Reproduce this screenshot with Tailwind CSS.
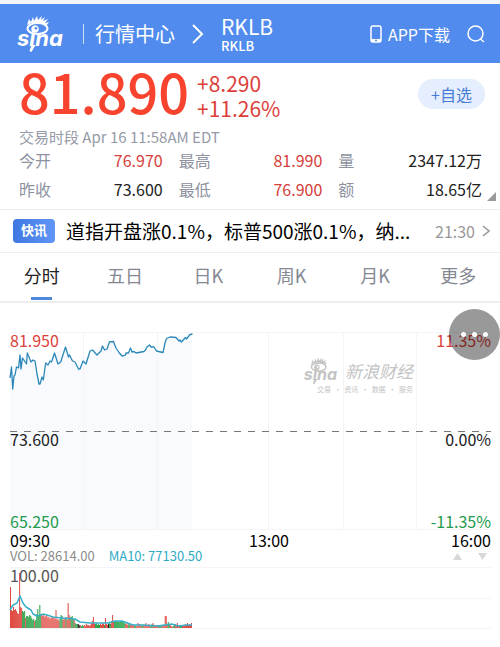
<!DOCTYPE html>
<html lang="zh-CN">
<head>
    <meta charset="UTF-8">
    <meta name="viewport" content="width=device-width, initial-scale=1.0">
    <title>RKLB 行情中心</title>
    <script src="https://cdn.jsdelivr.net/npm/@tailwindcss/browser@4"></script>
</head>
<body class="bg-white text-[#222] font-['Noto_Sans_CJK_SC',sans-serif]">
    <!-- Top bar -->
    <header class="flex items-center h-[63px] border-t-4 border-[#f3f5f6] bg-[#508bed] text-white pl-4 pr-[15px]">
        <a href="#" aria-label="sina" class="shrink-0">
            <svg class="w-[52px] h-[38px]" viewBox="0 0 52 38" fill="currentColor">
                <g id="sinaLogo">
                    <ellipse cx="21.500" cy="13.500" rx="10" ry="5.500" fill="none" stroke="currentColor" stroke-width="2"/>
                    <path fill-rule="evenodd" d="M19 10.200a3.800 3.800 0 1 0 .1 0zM20 12a1.400 1.400 0 1 1-.1 0z"/>
                    <path d="M11 10L13 4l2 3L17 2l1 4L21 1l1 4L26 1l-1 4L29 2l-2 4L32 4l-3 4 4-1-3 4C26 7 17 6 11 10z"/>
                    <path d="M15.500 30h4l-4 7-2-1z"/>
                    <text x="1" y="31" font-family="Inter, sans-serif" font-size="22" font-weight="700" font-style="italic">sina</text>
                </g>
            </svg>
        </a>
        <span class="w-px h-5 ml-[15px] bg-white/70"></span>
        <a href="#" class="ml-[11px] text-xl whitespace-nowrap">行情中心</a>
        <svg class="w-3 h-5 ml-[17px] shrink-0" viewBox="0 0 12 20" fill="none" stroke="currentColor" stroke-width="2"><path d="M1 1l9 9-9 9"/></svg>
        <div class="ml-[17px]">
            <h1 class="text-[21px] leading-6">RKLB</h1>
            <p class="text-[13px] leading-4 font-medium">RKLB</p>
        </div>
        <a href="#" class="flex items-center ml-auto text-base whitespace-nowrap">
            <svg class="w-3 h-[18px] mr-[6px]" viewBox="0 0 12 18"><rect x="1" y="1" width="10" height="16" rx="2" fill="none" stroke="currentColor" stroke-width="1.500"/><path fill="currentColor" d="M1 14h10v3H1z"/><circle cx="6" cy="15.500" r="1" fill="#508bed"/></svg>
            APP下载
        </a>
        <button aria-label="搜索" class="ml-[17px]">
            <svg class="w-[18px] h-[18px]" viewBox="0 0 18 18" fill="none" stroke="currentColor" stroke-width="1.500"><circle cx="8.500" cy="8.500" r="7.500"/><path d="M13.500 14l3.500 3"/></svg>
        </button>
    </header>

    <main>
        <!-- Quote -->
        <section class="relative pl-[19px] pr-[18px] pb-[5px] border-b border-[#eee]">
            <div class="flex items-start">
                <strong class="text-[54px] leading-14 font-medium text-[#f8432f]">81.890</strong>
                <div class="pt-2 ml-2 text-[21px] leading-[25px] text-[#dc403a]">
                    <p>+8.290</p>
                    <p>+11.26%</p>
                </div>
                <button class="ml-auto -mr-[3px] mt-4 h-[30px] px-[13px] rounded-full bg-[#e5eefc] text-base leading-7 text-[#477cd6]">+自选</button>
            </div>
            <p class="mt-[7px] text-[15px] leading-[18px] text-[#969aa8]">交易时段 Apr 16 11:58AM EDT</p>
            <dl class="grid grid-cols-3 gap-x-4 text-base leading-[29px] whitespace-nowrap">
                <div class="flex justify-between"><dt class="text-[#8e929f]">今开</dt><dd class="text-[#d5413d]">76.970</dd></div>
                <div class="flex justify-between"><dt class="text-[#8e929f]">最高</dt><dd class="text-[#d5413d]">81.990</dd></div>
                <div class="flex justify-between"><dt class="text-[#8e929f]">量</dt><dd>2347.12万</dd></div>
                <div class="flex justify-between"><dt class="text-[#8e929f]">昨收</dt><dd>73.600</dd></div>
                <div class="flex justify-between"><dt class="text-[#8e929f]">最低</dt><dd class="text-[#d5413d]">76.900</dd></div>
                <div class="flex justify-between"><dt class="text-[#8e929f]">额</dt><dd>18.65亿</dd></div>
            </dl>
            <svg class="absolute right-1 bottom-2 w-[9px] h-[9px]" viewBox="0 0 9 9"><path d="M9 0v9H0z" fill="#999"/></svg>
        </section>

        <!-- News flash -->
        <a href="#" class="flex items-center h-[43px] pl-[13px] pr-[10px] border-b border-[#eee] whitespace-nowrap">
            <span class="shrink-0 h-6 px-2 rounded bg-linear-to-r from-[#3f77e2] to-[#6096f6] text-[13px] leading-[22px] font-bold text-white">快讯</span>
            <span class="ml-[11px] text-[19px] leading-7 text-black">道指开盘涨0.1%，标普500涨0.1%，纳...</span>
            <time class="ml-auto text-base text-[#999]">21:30</time>
            <svg class="w-2 h-3 ml-[7px] shrink-0" viewBox="0 0 8 12" fill="none" stroke="#999" stroke-width="1.500"><path d="M1 1l6 5-6 5"/></svg>
        </a>

        <!-- Period tabs -->
        <nav class="grid grid-cols-6 h-[50px] border-b-2 border-[#eee] text-lg leading-[44px] text-[#858893]">
            <button class="flex flex-col items-center text-[#222]">分时<span class="w-[21px] h-[3px] bg-[#4f88dc]"></span></button>
            <button class="self-start">五日</button>
            <button class="self-start">日K</button>
            <button class="self-start">周K</button>
            <button class="self-start">月K</button>
            <button class="self-start">更多</button>
        </nav>

        <!-- Charts -->
        <section class="relative pt-[30px] pl-[10px] pr-[9px]">
            <div class="relative text-base leading-5">
                <svg class="block w-full h-[196px] overflow-visible" viewBox="10 333 481 196" preserveAspectRatio="none" fill="none">
                    <path fill="#f8fafe" d="M10 378L20 356 33 360 40 384 55 353 66 348 79 369 92 350 113 342 122 356 149 345 163 352 167 338 192 334V529H10z"/>
                    <path stroke="#f4f4f6" d="M10 332.500H491M10 529.500H491M83.500 333V529M157.500 333V529M268.500 333V529M343.500 333V529M416.500 333V529"/>
                    <path stroke="#777" stroke-dasharray="7 7" d="M10 431.500H491"/>
                    <path stroke="#2b88b8" stroke-width="1.300" stroke-linejoin="round" d="M10 378L11.500 367 12.700 389 14 376 15 375 16.500 367 18.500 368 20 355 21 369 22.500 358 26.500 364 27.300 353 31 362 33 360 35 361 37 374 39 384 40 384 42 377 43.300 380 45.700 363 48 365 50 361 51.500 362 54.500 353 58 364 60.700 362 65.500 347 68.500 357 69.500 355 72.500 361 75 362 78.500 369 80 369 83 361 86 364 90 351 92.500 350 97 355 101 351 102.500 346 104.500 350 107 349 109.500 342 113.500 341.500 116 348 118 351 119 352.500 122 356 125.500 355 126 353 128.500 353 130.500 348 132 352 134 351.500 136 353 144 351.500 145.500 350 147 347 149.500 345 151 347 154 347 156.500 351 163 352.500 165 343 166.500 338.500 170 337 176 337.500 179 341 180 340 181.500 342 185.500 337.500 186.500 339 190 334.500 192.500 334"/>
                </svg>
                <!-- Watermark -->
                <div class="absolute top-6 right-[78px] w-[110px] italic text-[#c4c4c4] whitespace-nowrap" aria-hidden="true">
                    <div class="flex items-center justify-between">
                        <svg class="w-[38px] h-[28px]" viewBox="0 0 52 38" fill="currentColor"><use href="#sinaLogo"/></svg>
                        <span class="text-[17px] leading-7">新浪财经</span>
                    </div>
                    <p class="flex justify-between pl-[14px] text-[7px] leading-2 not-italic"><span>交易</span><span>·</span><span>资讯</span><span>·</span><span>数据</span><span>·</span><span>服务</span></p>
                </div>
                <div class="absolute inset-x-0 -top-[3px] flex justify-between text-[#dc403a]"><span>81.950</span><span>11.35%</span></div>
                <div class="absolute inset-x-0 top-24 flex justify-between text-[#222]"><span>73.600</span><span>0.00%</span></div>
                <div class="absolute inset-x-0 bottom-0 -mb-[2px] flex justify-between text-[#229a4c]"><span>65.250</span><span>-11.35%</span></div>
            </div>
            <div class="grid grid-cols-[7fr_6fr] pt-px text-base leading-5 text-black">
                <span>09:30</span>
                <div class="flex justify-between"><span class="-translate-x-1/2">13:00</span><span>16:00</span></div>
            </div>
            <div class="flex items-center gap-[14px] text-[13px] leading-3">
                <span class="text-[#8c8c8c]">VOL: 28614.00</span>
                <span class="text-[#2faac4]">MA10: 77130.50</span>
                <div class="flex gap-4 ml-auto mr-1">
                    <button aria-label="上移"><svg class="w-[9px] h-[7px]" viewBox="0 0 9 7" fill="#d8d8d8"><path d="M0 7L4.500 0 9 7z"/></svg></button>
                    <button aria-label="下移"><svg class="w-[9px] h-[7px]" viewBox="0 0 9 7" fill="#d8d8d8"><path d="M0 0h9L4.500 7z"/></svg></button>
                </div>
            </div>
            <div class="relative mt-[5px]">
                <svg class="block w-full h-[62px] overflow-visible" viewBox="10 567 481 62" preserveAspectRatio="none" fill="none">
                    <path stroke="#f4f4f6" d="M10 567.500H491M10 598.500H491M10 628.500H491"/>
                    <g id="volumeBars"></g>
                    <path stroke="#38aec8" stroke-width="1.500" stroke-linejoin="round" d="M10 610L13 605 17 603 20 596 23 603 26 607 31 610 33 614 37 616 41 615 43 614 47 615 53 617 62 618 75 619 80 622 90 623 97 623 103 623 108 623 115 621 122 621 133 625 143 625 157 626 165 625 172 624 178 626 187 625 192 625"/>
                </svg>
                <span class="absolute left-0 -top-[2px] text-base leading-5 text-[#555]">100.00</span>
            </div>
            <button aria-label="更多操作" class="absolute right-0 top-[6px] w-[51px] h-[51px] rounded-full bg-black/40 flex items-center justify-center gap-[6px]">
                <span class="w-[5px] h-[5px] rounded-full bg-white"></span>
                <span class="w-[5px] h-[5px] rounded-full bg-white"></span>
                <span class="w-[5px] h-[5px] rounded-full bg-white"></span>
            </button>
        </section>
    </main>

    <script>
        // one bar per pixel column: r = up, g = down, k = flat
        const volume = [
            ['r', 41, 18, 17, 21, 18, 19, 17, 15, 14, 55, 21, 20], ['g', 17, 16, 17], ['r', 10], ['g', 12, 12, 11, 13, 12, 10, 8, 9],
            ['r', 7], ['g', 8, 14, 19, 12, 23, 14], ['r', 14, 12, 13, 11, 12, 13, 10, 11, 9, 10, 11, 11, 10, 9, 18, 8, 9, 7],
            ['g', 9, 13, 12], ['r', 8, 10, 9], ['g', 11], ['r', 8, 25, 13, 11], ['g', 11, 12, 9], ['r', 8], ['g', 5, 4, 4], ['k', 4, 3],
            ['r', 3], ['g', 2, 3, 2], ['r', 3, 2, 4, 3, 3, 2, 3, 5, 7, 11, 5], ['g', 4, 5, 3, 4, 3], ['r', 4, 3, 5, 4], ['g', 3], ['r', 10, 4, 3],
            ['k', 4], ['g', 5, 4], ['r', 7, 13, 6], ['g', 6, 7, 7, 6, 7, 6, 7, 7, 7, 6, 5], ['r', 4, 5, 3], ['g', 4, 3], ['r', 3, 4, 3, 3], ['g', 3, 2],
            ['r', 2, 5, 3, 4, 3], ['g', 2, 3], ['r', 3, 2, 5, 3, 2, 4, 3], ['g', 3, 4], ['r', 5, 3, 2, 3, 2, 3], ['g', 2, 3, 2], ['r', 2, 2, 3, 12, 12, 4],
            ['g', 6, 4], ['r', 3, 2, 1], ['g', 2, 3], ['r', 4, 3, 5, 2, 3], ['g', 2, 3], ['r', 2, 3, 2, 4, 3, 5, 3, 4, 3, 5]
        ];
        const colors = { r: '#df4a42', g: '#27a046', k: '#111' };
        const count = volume.reduce((sum, run) => sum + run.length - 1, 0);
        const step = 182 / count;
        const bars = document.getElementById('volumeBars');
        let x = 10;

        volume.forEach(([kind, ...heights]) => {
            heights.forEach(h => {
                const rect = document.createElementNS('http://www.w3.org/2000/svg', 'rect');
                rect.setAttribute('x', x);
                rect.setAttribute('y', 628 - h);
                rect.setAttribute('width', step);
                rect.setAttribute('height', h);
                rect.setAttribute('fill', colors[kind]);
                bars.appendChild(rect);
                x += step;
            });
        });
    </script>
</body>
</html>
